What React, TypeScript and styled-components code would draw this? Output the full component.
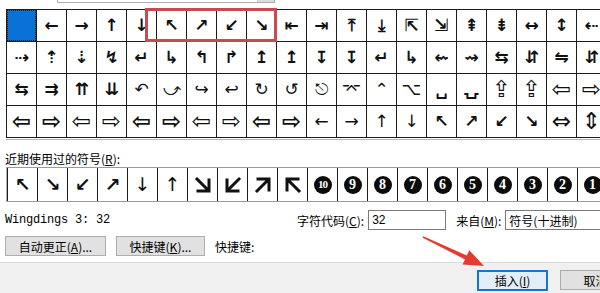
import React from "react";
import styled, { createGlobalStyle } from "styled-components";

const Global = createGlobalStyle`
  html, body { margin: 0; padding: 0; background: #fff; }
  body {
    font-family: "Noto Sans CJK SC", "Liberation Sans", sans-serif;
    font-size: 12px;
    color: #000;
  }
  #root { width: 600px; height: 293px; }
`;

const Viewport = styled.div`
  position: relative;
  width: 600px;
  height: 293px;
  overflow: hidden;
  background: #fff;
`;

const Dialog = styled.div`
  width: 645px;
  height: 293px;
  display: flex;
  flex-direction: column;
`;

const TopStrip = styled.div`
  height: 9px;
  flex-shrink: 0;
`;

const SubsetBox = styled.div`
  margin-left: 57px;
  width: 216px;
  height: 2px;
  box-sizing: content-box;
  border: 1px solid #adadad;
  border-top: none;
  display: flex;
  justify-content: flex-end;
`;

const SubsetDrop = styled.div`
  width: 16px;
  background: #dcdcdc;
  border-left: 1px solid #c8c8c8;
`;

const SymbolGrid = styled.div`
  margin-left: 6px;
  width: max-content;
  display: grid;
  grid-template-columns: repeat(20, 29px);
  grid-auto-rows: 31px;
  gap: 1px;
  padding: 1px;
  background: #1c1c1c;
  flex-shrink: 0;
`;

const GridShadow = styled.div`
  margin-left: 6px;
  height: 1px;
  background: #b4b4b4;
  margin-top: 1px;
  flex-shrink: 0;
`;

const Cell = styled.div<{ $selected?: boolean; $thin?: boolean; $big?: boolean }>`
  background: ${(p) => (p.$selected ? "#0a72d6" : "#fff")};
  outline: ${(p) => (p.$selected ? "1px dotted #1b1b1b" : "none")};
  outline-offset: -1px;
  display: flex;
  align-items: center;
  justify-content: center;
  font-family: "DejaVu Sans", sans-serif;
  font-size: ${(p) => (p.$big ? "23px" : "17px")};
  font-weight: ${(p) => (p.$thin ? "normal" : "bold")};
  line-height: 1;
  color: #111;
`;

const SectionLabel = styled.div`
  margin: 10px 0 0 5px;
  height: 17px;
  line-height: 17px;
  flex-shrink: 0;
`;

const RecentRow = styled.div`
  margin-left: 6px;
  width: max-content;
  display: grid;
  grid-template-columns: repeat(20, 29px);
  grid-auto-rows: 33px;
  column-gap: 1px;
  padding-left: 1px;
  background: #1c1c1c;
  border-top: 1px solid #9a9a9a;
  border-bottom: 1px solid #9a9a9a;
  border-left: 1px solid #b0b0b0;
  flex-shrink: 0;
`;

const RecentCell = styled.div<{ $thin?: boolean }>`
  background: #fff;
  display: flex;
  align-items: center;
  justify-content: center;
  font-family: "DejaVu Sans", sans-serif;
  font-size: 19px;
  font-weight: ${(p) => (p.$thin ? "normal" : "bold")};
  line-height: 1;
  color: #111;
`;

const NumberDisc = styled.span<{ $small?: boolean }>`
  width: 18px;
  height: 18px;
  border-radius: 50%;
  background: #0c0c0c;
  color: #fff;
  display: flex;
  align-items: center;
  justify-content: center;
  font-family: "Liberation Serif", serif;
  font-weight: bold;
  font-size: ${(p) => (p.$small ? "11px" : "14px")};
  letter-spacing: ${(p) => (p.$small ? "-1px" : "0")};
`;

const InfoRow = styled.div`
  margin-top: 8px;
  height: 20px;
  display: flex;
  align-items: center;
  flex-shrink: 0;
`;

const FontName = styled.span`
  width: 292px;
  padding-left: 5px;
  font-family: "Liberation Mono", monospace;
  font-size: 12px;
  letter-spacing: -0.2px;
`;

const FieldLabel = styled.span`
  white-space: nowrap;
`;

const TextBox = styled.div<{ $w: number }>`
  width: ${(p) => p.$w}px;
  height: 20px;
  box-sizing: border-box;
  border: 1px solid #7a7a7a;
  background: #fff;
  padding-left: 3px;
  display: flex;
  align-items: center;
  white-space: nowrap;
  margin-left: 4px;
`;

const CodeText = styled.span`
  font-family: "Liberation Sans", sans-serif;
  font-size: 12px;
`;

const Spacer = styled.div<{ $w: number }>`
  width: ${(p) => p.$w}px;
  flex-shrink: 0;
`;

const ButtonRow = styled.div`
  margin-top: 6px;
  padding-left: 5px;
  height: 20px;
  display: flex;
  align-items: center;
  gap: 10px;
  flex-shrink: 0;
`;

const Button = styled.div<{ $w: number; $focused?: boolean }>`
  width: ${(p) => p.$w}px;
  height: ${(p) => (p.$focused ? 21 : 20)}px;
  box-sizing: border-box;
  border: ${(p) => (p.$focused ? "2px solid #0f78d4" : "1px solid #adadad")};
  background: ${(p) => (p.$focused ? "#e3eef9" : "#e1e1e1")};
  display: flex;
  align-items: center;
  justify-content: center;
  white-space: nowrap;
  font-size: 12px;
`;

const Separator = styled.div`
  margin-top: 6px;
  height: 1px;
  background: #dadada;
  flex-shrink: 0;
`;

const Footer = styled.div`
  flex: 1;
  background: #f0f0f0;
  display: flex;
  justify-content: flex-end;
  align-items: flex-start;
  padding: 7px 14px 0 0;
  gap: 12px;
`;

const Highlight = styled.div`
  position: absolute;
  left: 145px;
  top: 8px;
  width: 132px;
  height: 34px;
  box-sizing: border-box;
  border: 3px solid #c94a50;
  pointer-events: none;
`;

const Pointer = styled.svg`
  position: absolute;
  left: 416px;
  top: 230px;
  width: 72px;
  height: 40px;
  pointer-events: none;
`;

type Sym = { c: string; thin?: boolean; big?: boolean };

const BIG = ["⇦", "⇨", "⇔", "⇕", "⇪"];
const THIN3 = ["↻", "↺", "⎋", "⌤", "⌃", "⌥", "⇪", "⇦", "⇨", "↪", "↩", "↶", "⤻"];

const mk = (c: string, thin?: boolean): Sym => ({ c, thin, big: BIG.includes(c) });

const rows: Sym[][] = [
  ["", "←", "→", "↑", "↓", "↖", "↗", "↙", "↘", "⇤", "⇥", "⤒", "⤓", "⇱", "⇲", "⇞", "⇟", "↔", "↕", "⇠"].map((c) => mk(c)),
  ["⇢", "⇡", "⇣", "↯", "↵", "↳", "↰", "↱", "↥", "↥", "↧", "↧", "↵", "↳", "⇜", "⇝", "⇆", "⇵", "⇋", "⇵"].map((c) => mk(c)),
  ["⇆", "⇉", "⇈", "⇊", "↶", "⤻", "↪", "↩", "↻", "↺", "⎋", "⌤", "⌃", "⌥", "␣", "⍽", "⇪", "⇪", "⇦", "⇨"].map((c) => mk(c, THIN3.includes(c))),
  [
    ...["⇦", "⇨", "⇦", "⇨", "⇦", "⇨", "⇦", "⇨", "⇦", "⇨"].map((c, i) => mk(c, i % 4 === 2 || i % 4 === 3)),
    ...["←", "→", "↑", "↓"].map((c) => mk(c, true)),
    ...["↖", "↗", "↙", "↘"].map((c) => mk(c)),
    mk("⇔", true),
    mk("⇕", true),
  ],
];

const CornerArrow: React.FC<{ rot: number }> = ({ rot }) => (
  <svg width="18" height="18" viewBox="0 0 18 18" style={{ transform: `rotate(${rot}deg)` }}>
    <path d="M3 3 L14 14 M15 4 L15 15 L4 15" stroke="#111" strokeWidth="3" fill="none" strokeLinecap="square" />
  </svg>
);

const U = styled.u`
  text-underline-offset: 1px;
`;

export default function App() {
  const recentArrows: Sym[] = [
    { c: "↖" },
    { c: "↘" },
    { c: "↙" },
    { c: "↗" },
    { c: "↓", thin: true },
    { c: "↑", thin: true },
  ];
  const corners = [0, 90, -90, 180];
  const nums = [10, 9, 8, 7, 6, 5, 4, 3, 2, 1];

  return (
    <Viewport>
      <Global />
      <Dialog>
        <TopStrip>
          <SubsetBox>
            <SubsetDrop />
          </SubsetBox>
        </TopStrip>
        <SymbolGrid>
          {rows.map((r, ri) =>
            r.map((s, ci) => (
              <Cell key={`${ri}-${ci}`} $selected={ri === 0 && ci === 0} $thin={s.thin} $big={s.big}>
                {s.c}
              </Cell>
            ))
          )}
        </SymbolGrid>
        <GridShadow />
        <SectionLabel>
          近期使用过的符号(<U>R</U>):
        </SectionLabel>
        <RecentRow>
          {recentArrows.map((s, i) => (
            <RecentCell key={`a${i}`} $thin={s.thin}>
              {s.c}
            </RecentCell>
          ))}
          {corners.map((r, i) => (
            <RecentCell key={`c${i}`}>
              <CornerArrow rot={r} />
            </RecentCell>
          ))}
          {nums.map((n) => (
            <RecentCell key={`n${n}`}>
              <NumberDisc $small={n === 10}>{n}</NumberDisc>
            </RecentCell>
          ))}
        </RecentRow>
        <InfoRow>
          <FontName>Wingdings 3: 32</FontName>
          <FieldLabel>
            字符代码(<U>C</U>):
          </FieldLabel>
          <TextBox $w={78}>
            <CodeText>32</CodeText>
          </TextBox>
          <Spacer $w={10} />
          <FieldLabel>
            来自(<U>M</U>):
          </FieldLabel>
          <TextBox $w={120}>符号(十进制)</TextBox>
        </InfoRow>
        <ButtonRow>
          <Button $w={101}>
            自动更正(<U>A</U>)...
          </Button>
          <Button $w={89}>
            快捷键(<U>K</U>)...
          </Button>
          <FieldLabel>快捷键:</FieldLabel>
        </ButtonRow>
        <Separator />
        <Footer>
          <Button $w={71} $focused>
            插入(<U>I</U>)
          </Button>
          <Button $w={71}>取消</Button>
        </Footer>
      </Dialog>
      <Highlight />
      <Pointer viewBox="0 0 72 40">
        <polygon
          points="7.3,6.3 50.8,25.4 53.3,20.2 68,36 46.5,34.6 49,29.4 6.7,7.7"
          fill="#e53a2f"
        />
      </Pointer>
    </Viewport>
  );
}
